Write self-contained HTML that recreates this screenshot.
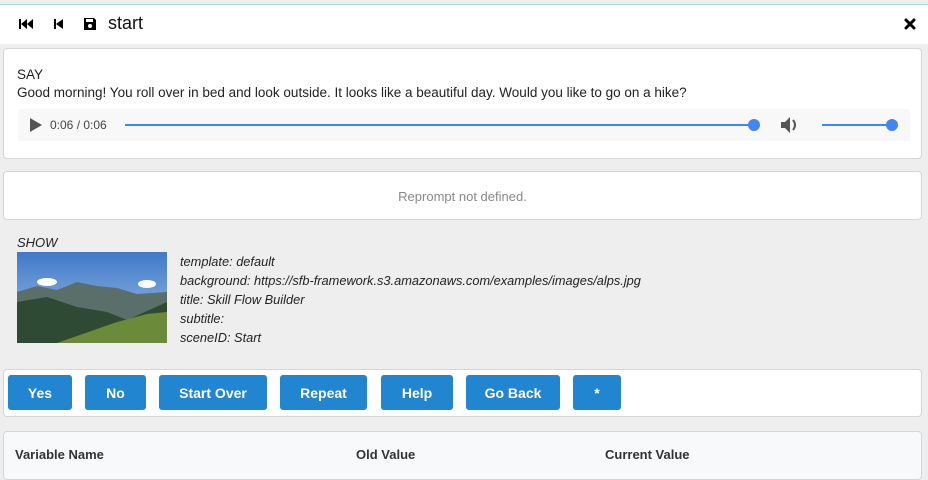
<!DOCTYPE html>
<html><head><style>
*{box-sizing:border-box;margin:0;padding:0}
body{width:928px;height:480px;overflow:hidden;background:#eeeeee;font-family:"Liberation Sans",sans-serif;color:#222;position:relative}
.hdr{position:absolute;left:0;top:4px;width:928px;height:40px;background:#fff;border-top:1px solid #a8dde6}
.card{position:absolute;left:3px;width:919px;background:#fff;border:1px solid #d6d6d6;border-radius:4px}
.btn{position:absolute;top:5px;height:35px;background:#2185d0;color:#fff;border-radius:3px;font-weight:bold;font-size:14px;display:flex;align-items:center;justify-content:center}
.meta{position:absolute;left:180px;font-style:italic;font-size:12.8px;line-height:19px;color:#222}
</style></head><body>
<div class="hdr">
 <svg style="position:absolute;left:18px;top:12px" width="16" height="14" viewBox="0 0 16 14"><rect x="1" y="2" width="2" height="10"/><path d="M9 2 3 7 9 12Z M15 2 9 7 15 12Z"/></svg>
 <svg style="position:absolute;left:53px;top:12px" width="12" height="14" viewBox="0 0 12 14"><rect x="1" y="2" width="2" height="10"/><path d="M10 2 3 7 10 12Z"/></svg>
 <svg style="position:absolute;left:83px;top:12px" width="14" height="14" viewBox="0 0 14 14"><path d="M1 1H11L13 3V13H1Z" fill="#000"/><rect x="3" y="2" width="7" height="3" fill="#fff"/><circle cx="7" cy="9" r="2" fill="#fff"/></svg>
 <div style="position:absolute;left:108px;top:8px;font-size:18px;color:#111">start</div>
 <svg style="position:absolute;left:904px;top:13px" width="12" height="12" viewBox="0 0 12 12"><path d="M2 2 10 10M10 2 2 10" stroke="#000" stroke-width="3" stroke-linecap="round"/></svg>
</div>
<div class="card" style="top:48px;height:111px">
 <div style="position:absolute;left:13px;top:17px;font-size:13.5px;line-height:18px">SAY<br>Good morning! You roll over in bed and look outside. It looks like a beautiful day. Would you like to go on a hike?</div>
 <div style="position:absolute;left:14px;top:60px;width:892px;height:32px;background:#f8f8f8">
  <svg style="position:absolute;left:12px;top:9px" width="12" height="14"><path d="M0 0 12 7 0 14Z" fill="#555"/></svg>
  <div style="position:absolute;left:32px;top:9px;font-size:12px;color:#444">0:06 / 0:06</div>
  <div style="position:absolute;left:107px;top:15px;width:630px;height:2px;background:#4285f4"></div>
  <div style="position:absolute;left:730px;top:10px;width:12px;height:12px;border-radius:50%;background:#4285f4"></div>
  <svg style="position:absolute;left:762px;top:7px" width="18" height="18" viewBox="0 0 18 18"><path d="M1 6H5L10 1V17L5 12H1Z" fill="#555"/><path d="M13 4Q17 9 13 14" stroke="#555" stroke-width="2" fill="none"/></svg>
  <div style="position:absolute;left:804px;top:15px;width:68px;height:2px;background:#4285f4"></div>
  <div style="position:absolute;left:868px;top:10px;width:12px;height:12px;border-radius:50%;background:#4285f4"></div>
 </div>
</div>
<div class="card" style="top:171px;height:49px">
 <div style="text-align:center;padding-top:17px;font-size:13px;color:#888">Reprompt not defined.</div>
</div>
<div style="position:absolute;left:17px;top:235px;font-style:italic;font-size:13px">SHOW</div>
<svg style="position:absolute;left:17px;top:252px" width="150" height="91" viewBox="0 0 150 91">
 <defs><linearGradient id="s" x1="0" y1="0" x2="0" y2="1"><stop offset="0" stop-color="#3f79c9"/><stop offset="1" stop-color="#a9c6e8"/></linearGradient></defs>
 <rect width="150" height="91" fill="url(#s)"/>
 <ellipse cx="30" cy="30" rx="10" ry="4" fill="#fff"/><ellipse cx="130" cy="32" rx="9" ry="4" fill="#fff"/>
 <path d="M0 40 20 34 40 38 60 30 80 34 100 36 120 42 150 40V91H0Z" fill="#5a6e6a"/>
 <path d="M0 50 30 45 60 55 90 60 110 68 150 50V91H0Z" fill="#2f4a34"/>
 <path d="M40 91 100 70 130 62 150 60V91Z" fill="#6b8b3a"/>
</svg>
<div class="meta" style="top:252px">template: default<br>background: https://sfb-framework.s3.amazonaws.com/examples/images/alps.jpg<br>title: Skill Flow Builder<br>subtitle:<br>sceneID: Start</div>
<div class="card" style="top:369px;height:48px">
 <div class="btn" style="left:4px;width:64px">Yes</div>
 <div class="btn" style="left:81px;width:61px">No</div>
 <div class="btn" style="left:155px;width:108px">Start Over</div>
 <div class="btn" style="left:276px;width:87px">Repeat</div>
 <div class="btn" style="left:377px;width:72px">Help</div>
 <div class="btn" style="left:462px;width:94px">Go Back</div>
 <div class="btn" style="left:569px;width:48px">*</div>
</div>
<div class="card" style="top:431px;height:49px;background:#f8f9fa;font-size:13px;font-weight:bold;color:#333">
 <div style="position:absolute;left:11px;top:15px">Variable Name</div>
 <div style="position:absolute;left:352px;top:15px">Old Value</div>
 <div style="position:absolute;left:601px;top:15px">Current Value</div>
</div>
</body></html>
